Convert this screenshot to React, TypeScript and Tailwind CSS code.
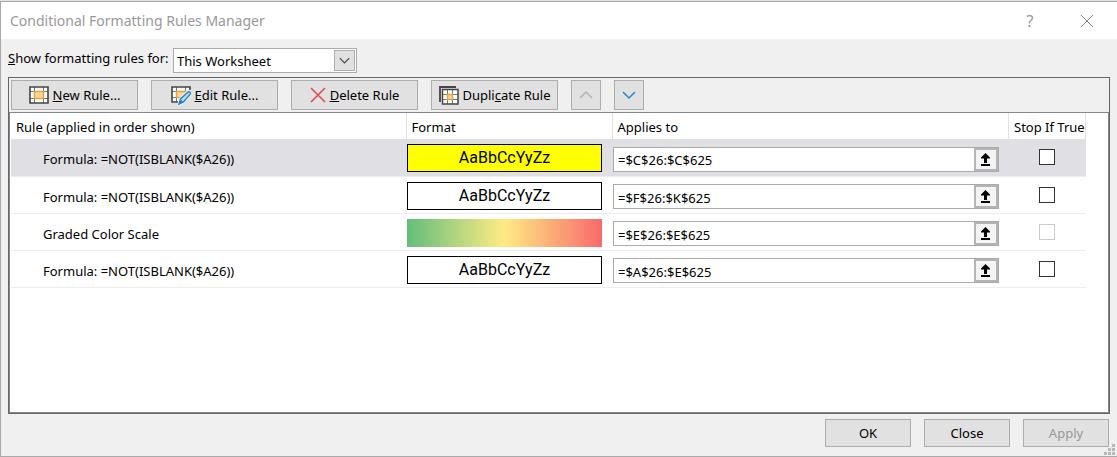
import { useState } from "react";
import type { ReactNode } from "react";

type Rule = {
  name: string;
  range: string;
  format: "yellow" | "plain" | "scale";
};

const rules: Rule[] = [
  { name: "Formula: =NOT(ISBLANK($A26))", range: "=$C$26:$C$625", format: "yellow" },
  { name: "Formula: =NOT(ISBLANK($A26))", range: "=$F$26:$K$625", format: "plain" },
  { name: "Graded Color Scale", range: "=$E$26:$E$625", format: "scale" },
  { name: "Formula: =NOT(ISBLANK($A26))", range: "=$A$26:$E$625", format: "plain" },
];

function GridIcon() {
  return (
    <svg width="20" height="18" viewBox="0 0 20 18" fill="none" aria-hidden="true">
      <path d="M1 1h18v16H1z" fill="#fff" />
      <path d="M5.5 1v16M14.5 1v16M1 5.5h18M1 12.5h18" stroke="#777" />
      <path d="M5.5 5.5h9v7h-9z" fill="#ffd894" stroke="#e8a048" strokeWidth="1.5" />
      <path d="M1 1h18v16H1z" stroke="#444" strokeWidth="1.6" />
    </svg>
  );
}

function EditIcon() {
  return (
    <svg width="20" height="20" viewBox="0 0 20 20" fill="none" aria-hidden="true">
      <path d="M1 2h18L9 17H1z" fill="#fff" />
      <path d="M5.5 2v15M14.5 2v4M1 6.5h17M1 12.5h8" stroke="#777" />
      <path d="M10 12.5H5.5v-6H15" fill="#ffd894" stroke="#e8a048" strokeWidth="1.5" />
      <path d="M19 5V2H1v15h6" stroke="#444" strokeWidth="1.6" />
      <path d="M8 19l1.5-5L17 7q1.2-.6 2 .2t.2 2L12.5 17z" stroke="#f4f4f4" strokeWidth="3" />
      <path d="M8 19l1.5-5L17 7q1.2-.6 2 .2t.2 2L12.5 17z" fill="#b9ddf3" stroke="#2488c8" strokeWidth="1.5" />
      <path d="M8 19l1.5-4.5 3 2.5z" fill="#2488c8" />
    </svg>
  );
}

function DeleteIcon() {
  return (
    <svg width="16" height="16" viewBox="0 0 16 16" fill="none" aria-hidden="true">
      <path d="M1 1l14 14M15 1L1 15" stroke="#e0484d" strokeWidth="1.5" />
    </svg>
  );
}

function DuplicateIcon() {
  return (
    <svg width="20" height="19" viewBox="0 0 20 19" fill="none" aria-hidden="true">
      <path d="M1 16V1h16" stroke="#444" strokeWidth="1.8" />
      <path d="M3.5 3.5h15.500v14.500H3.500z" fill="#fff" />
      <path d="M8.5 3v15M13.500 3v15M3 8.500h16M3 13.500h16" stroke="#777" />
      <path d="M8.5 8.500h5v5h-5z" fill="#ffd894" stroke="#e8a048" strokeWidth="1.5" />
      <path d="M3.5 3.500h15.500v14.500H3.500z" stroke="#444" strokeWidth="1.5" />
    </svg>
  );
}

function Chevron({ up, color, size }: { up?: boolean; color: string; size: number }) {
  return (
    <svg width={size} height={size} viewBox="0 0 14 14" fill="none" aria-hidden="true">
      <path d={up ? "M1 10l6-6 6 6" : "M1 4l6 6 6-6"} stroke={color} strokeWidth="1.5" />
    </svg>
  );
}

function ToolButton({ children }: { children: ReactNode }) {
  return (
    <button className="flex h-[30px] w-[127px] items-center justify-center border border-[#adadad] bg-[#e1e1e1] whitespace-nowrap">
      {children}
    </button>
  );
}

function FormatPreview({ format }: { format: Rule["format"] }) {
  if (format === "scale") {
    return <div className="h-7 bg-[linear-gradient(to_right,#63be7b,#ffeb84_50%,#f8696b)]" />;
  }
  return (
    <div
      className={`flex h-7 items-center justify-center border border-black font-[Roboto,sans-serif] text-base ${
        format === "yellow" ? "bg-[#ffff00]" : "bg-white"
      }`}
    >
      AaBbCcYyZz
    </div>
  );
}

function RuleRow({ rule, selected, onSelect }: { rule: Rule; selected: boolean; onSelect: () => void }) {
  return (
    <tr
      onClick={onSelect}
      className={`h-[37px] border-b border-[#ededed] ${selected ? "bg-[#e0dfe4]" : "bg-white"}`}
    >
      <td className="pt-1 pl-8">{rule.name}</td>
      <td className="pt-0.5 pr-2.5 pl-px">
        <FormatPreview format={rule.format} />
      </td>
      <td className="pt-1 pr-2.5 pl-px">
        <div className="flex h-[25px] border border-[#ababab] bg-white">
          <input
            aria-label={`Applies to, ${rule.range}`}
            defaultValue={rule.range}
            className="min-w-0 flex-1 bg-transparent pt-0.5 pl-1 outline-none"
          />
          <button
            aria-label="Collapse dialog"
            className="flex w-6 items-center justify-center border-2 border-[#b4b4b4] bg-[#f4f4f4]"
          >
            <svg width="11" height="13" viewBox="0 0 11 13" aria-hidden="true">
              <path d="M5.5 0L10 4.5V5.5H7V10H4V5.5H1v-1zM1 11h9v2H1z" />
            </svg>
          </button>
        </div>
      </td>
      <td>
        <input
          type="checkbox"
          aria-label="Stop If True"
          disabled={rule.format === "scale"}
          className="mx-auto block size-4 appearance-none border border-[#333] bg-white checked:bg-[#333] disabled:border-[#ccc]"
        />
      </td>
    </tr>
  );
}

export default function App() {
  const [selected, setSelected] = useState(0);
  return (
    <div className="flex min-h-screen flex-col bg-[#e2e2e2] pt-px font-['Noto_Sans',sans-serif] text-[13px] leading-4 text-black">
      <main className="flex flex-1 flex-col border-y border-l border-[#aaa] bg-[#f0f0f0]">
        <header className="flex h-[37px] items-center bg-white pr-[23px] pl-[9px] text-[#999]">
          <h1 className="flex-1 text-sm">Conditional Formatting Rules Manager</h1>
          <button aria-label="Help" className="w-5 text-base">?</button>
          <button aria-label="Close window" className="ml-10">
            <svg width="14" height="14" viewBox="0 0 14 14" fill="none" aria-hidden="true">
              <path d="M1 1l12 12M13 1L1 13" stroke="#888" />
            </svg>
          </button>
        </header>

        <section className="flex flex-1 flex-col pt-[9px] pr-[7px] pb-[9px] pl-[7px]">
          <div className="flex h-[29px] items-start">
            <label htmlFor="scope" className="w-[165px] pt-0.5 whitespace-nowrap">
              <span className="underline">S</span>how formatting rules for:
            </label>
            <div className="relative">
              <select
                id="scope"
                className="block h-[25px] w-[184px] appearance-none border border-[#ababab] bg-white pl-[3px] outline-none"
              >
                <option>This Worksheet</option>
                <option>Current Selection</option>
              </select>
              <span className="pointer-events-none absolute inset-y-0.5 right-0.5 flex w-[21px] items-center justify-center border border-[#adadad] bg-[#e1e1e1]">
                <Chevron color="#444" size={11} />
              </span>
            </div>
          </div>

          <div className="flex flex-1 flex-col border border-[#666]">
            <div className="flex gap-[13px] px-0.5 py-0.5">
              <ToolButton>
                <GridIcon />
                <span className="ml-1"><span className="underline">N</span>ew Rule...</span>
              </ToolButton>
              <ToolButton>
                <EditIcon />
                <span className="ml-1"><span className="underline">E</span>dit Rule...</span>
              </ToolButton>
              <ToolButton>
                <DeleteIcon />
                <span className="ml-1"><span className="underline">D</span>elete Rule</span>
              </ToolButton>
              <ToolButton>
                <DuplicateIcon />
                <span className="ml-1">Dupli<span className="underline">c</span>ate Rule</span>
              </ToolButton>
              <button
                aria-label="Move up"
                disabled
                className="flex size-[30px] items-center justify-center border border-[#adadad] bg-[#e1e1e1]"
              >
                <Chevron up color="#b4b4b4" size={14} />
              </button>
              <button
                aria-label="Move down"
                className="flex size-[30px] items-center justify-center border border-[#adadad] bg-[#e1e1e1]"
              >
                <Chevron color="#2488c8" size={14} />
              </button>
            </div>

            <div className="flex-1 border border-[#828790] bg-white pr-[22px] pl-px">
              <table className="w-full table-fixed border-collapse text-left">
                <colgroup>
                  <col className="w-[395px]" />
                  <col className="w-[206px]" />
                  <col />
                  <col className="w-[77px]" />
                </colgroup>
                <thead>
                  <tr className="h-[26px]">
                    <th className="border-r border-[#e2e2e2] pt-0.5 pl-[5px] font-normal">Rule (applied in order shown)</th>
                    <th className="border-r border-[#e2e2e2] pt-0.5 pl-[5px] font-normal">Format</th>
                    <th className="border-r border-[#e2e2e2] pt-0.5 pl-[5px] font-normal">Applies to</th>
                    <th className="border-r border-[#e2e2e2] pt-0.5 pl-[5px] font-normal whitespace-nowrap">Stop If True</th>
                  </tr>
                </thead>
                <tbody>
                  {rules.map((rule, index) => (
                    <RuleRow
                      key={rule.range}
                      rule={rule}
                      selected={selected === index}
                      onSelect={() => setSelected(index)}
                    />
                  ))}
                </tbody>
              </table>
            </div>
          </div>

          <footer className="flex justify-end gap-[13px] pt-[5px] pr-px">
            <button className="h-7 w-[86px] border border-[#adadad] bg-[#e1e1e1]">OK</button>
            <button className="h-7 w-[86px] border border-[#adadad] bg-[#e1e1e1]">Close</button>
            <button disabled className="h-7 w-[86px] border border-[#adadad] bg-[#e1e1e1] text-[#999]">Apply</button>
          </footer>
        </section>
      </main>
      <svg className="absolute right-0.5 bottom-0.5" width="11" height="11" viewBox="0 0 11 11" fill="#b8b8b8" aria-hidden="true">
        <path d="M8 0h3v3H8zM4 4h3v3H4zM8 4h3v3H8zM0 8h3v3H0zM4 8h3v3H4zM8 8h3v3H8z" />
      </svg>
    </div>
  );
}
